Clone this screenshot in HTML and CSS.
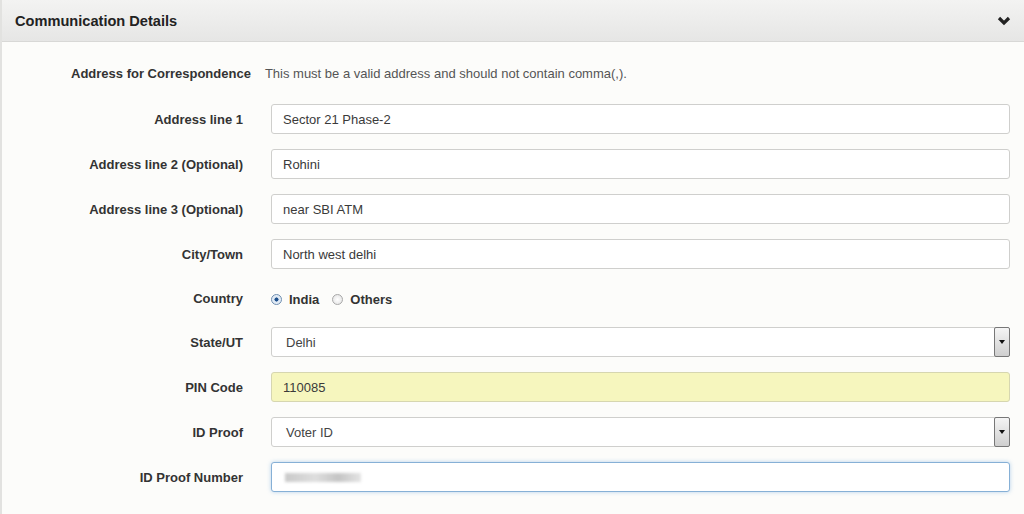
FILE: index.html
```html
<!DOCTYPE html>
<html lang="en">

<head>
  <meta charset="UTF-8">
  <meta name="viewport" content="width=device-width, initial-scale=1.0">
  <title>Communication Details</title>
  <link rel="stylesheet" href="styles.css">
</head>

<body>
  <div class="panel">
    <div class="panel-heading">
      <h2>Communication Details</h2>
      <svg class="chevron" width="14" height="10" viewBox="0 0 14 10">
        <polyline points="2,2 7,7 12,2" fill="none" stroke="#222" stroke-width="3.2" />
      </svg>
    </div>

    <div class="panel-body">
      <div class="note-row">
        <span class="note-label">Address for Correspondence</span>
        <span class="note-text">This must be a valid address and should not contain comma(,).</span>
      </div>

      <div class="form-row">
        <label>Address line 1</label>
        <input class="field" type="text" value="Sector 21 Phase-2">
      </div>

      <div class="form-row">
        <label>Address line 2 (Optional)</label>
        <input class="field" type="text" value="Rohini">
      </div>

      <div class="form-row">
        <label>Address line 3 (Optional)</label>
        <input class="field" type="text" value="near SBI ATM">
      </div>

      <div class="form-row">
        <label>City/Town</label>
        <input class="field" type="text" value="North west delhi">
      </div>

      <div class="form-row radio-row">
        <label>Country</label>
        <div class="radios">
          <span class="radio checked"></span><span class="radio-text">India</span>
          <span class="radio"></span><span class="radio-text">Others</span>
        </div>
      </div>

      <div class="form-row">
        <label>State/UT</label>
        <div class="field select">
          <span class="select-value">Delhi</span>
          <span class="select-arrow"></span>
        </div>
      </div>

      <div class="form-row">
        <label>PIN Code</label>
        <input class="field filled" type="text" value="110085">
      </div>

      <div class="form-row">
        <label>ID Proof</label>
        <div class="field select">
          <span class="select-value">Voter ID</span>
          <span class="select-arrow"></span>
        </div>
      </div>

      <div class="form-row">
        <label>ID Proof Number</label>
        <div class="field focused">
          <span class="masked"></span>
        </div>
      </div>
    </div>
  </div>
</body>

</html>
```

FILE: styles.css
```css
body {
  margin: 0;
  padding: 0;
  font-family: 'Liberation Sans', Arial, sans-serif;
  background-color: #fcfcfa;
  color: #333;
}

.panel {
  border-left: 2px solid #e2e2e0;
  min-height: 514px;
}

.panel-heading {
  display: flex;
  justify-content: space-between;
  align-items: center;
  height: 41px;
  padding: 0 13px 0 13px;
  background: linear-gradient(#f3f3f2, #e6e6e5);
  border-bottom: 1px solid #d8d8d6;
}

.panel-heading h2 {
  margin: 0;
  font-size: 14.6px;
  font-weight: bold;
  color: #222;
}

.chevron {
  margin-top: 1px;
}

.panel-body {
  padding: 16px 14px 0 0;
  display: flex;
  flex-direction: column;
  gap: 15px;
}

/* Note row */
.note-row {
  display: flex;
  align-items: center;
  height: 30px;
  padding-left: 69px;
  gap: 14px;
  margin-bottom: 1px;
}

.note-label {
  font-size: 13px;
  font-weight: bold;
  color: #333;
}

.note-text {
  font-size: 13px;
  color: #555;
}

/* Rows */
.form-row {
  display: grid;
  grid-template-columns: 241px 1fr;
  gap: 28px;
  align-items: center;
  height: 30px;
}

.form-row label {
  text-align: right;
  font-size: 13px;
  font-weight: bold;
  color: #333;
  padding-top: 1px;
}

.radio-row {
  height: 28px;
}

.field {
  box-sizing: border-box;
  height: 30px;
  width: 100%;
  padding: 0 11px;
  font-family: 'Liberation Sans', Arial, sans-serif;
  font-size: 13px;
  color: #3a3a3a;
  background-color: #fff;
  border: 1px solid #cfcfcd;
  border-radius: 3px;
  outline: none;
}

.field.filled {
  background-color: #f6f6be;
  border-color: #d6d6b0;
}

.field.focused {
  display: flex;
  align-items: center;
  border-color: #86b0d6;
  box-shadow: 0 0 4px rgba(100, 160, 220, 0.45);
}

.masked {
  display: block;
  width: 76px;
  height: 9px;
  background: linear-gradient(90deg, #c9c9c9, #dedede 40%, #c4c4c4 70%, #e4e4e4);
  filter: blur(1.5px);
  margin-left: 2px;
}

/* Select */
.select {
  display: flex;
  align-items: center;
  justify-content: space-between;
  padding: 0 0 0 14px;
}

.select-value {
  font-size: 13px;
  color: #444;
}

.select-arrow {
  box-sizing: border-box;
  width: 16px;
  height: 30px;
  margin-right: -1px;
  border: 1px solid #777;
  border-radius: 2px;
  background: linear-gradient(#f5f5f5, #cfcfcf);
  display: flex;
  align-items: center;
  justify-content: center;
}

.select-arrow::after {
  content: '';
  border-left: 3px solid transparent;
  border-right: 3px solid transparent;
  border-top: 4px solid #111;
}

/* Radios */
.radios {
  display: flex;
  align-items: center;
  padding-left: 0;
  padding-top: 2px;
}

.radio {
  box-sizing: border-box;
  width: 11px;
  height: 11px;
  border-radius: 50%;
  border: 1px solid #a8a8a8;
  background: radial-gradient(#fff, #e0e0e0);
  margin-right: 7px;
}

.radio.checked {
  background: radial-gradient(#1c4f8c 28%, #dbe6f2 36%, #eef3f8);
  border-color: #6d8db0;
}

.radio-text {
  font-size: 13px;
  font-weight: bold;
  color: #333;
  margin-right: 13px;
}
```
